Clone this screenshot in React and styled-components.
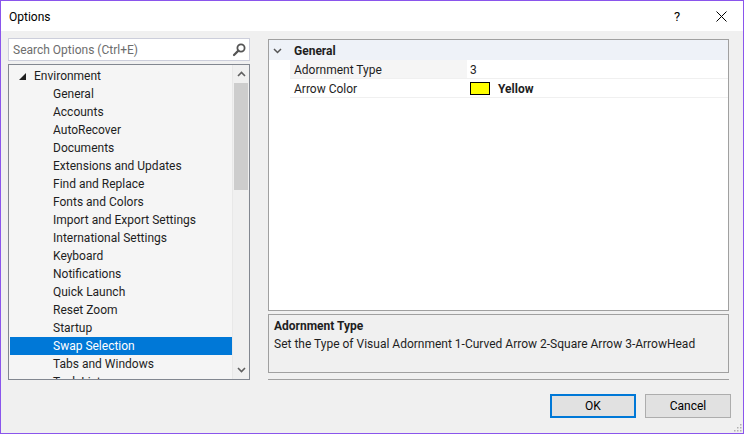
import React from "react";
import styled, { createGlobalStyle } from "styled-components";

const Global = createGlobalStyle`
  html, body { margin: 0; padding: 0; background: #ffffff; }
  * { box-sizing: border-box; }
  body { font-family: Roboto, "Noto Sans", sans-serif; font-size: 12px; color: #1e1e1e; }
`;

const Window = styled.div`
  width: 744px;
  height: 434px;
  border: 1px solid #8a55ec;
  display: flex;
  flex-direction: column;
  background: #f0f0f0;
  overflow: hidden;
`;

const TitleBar = styled.div`
  height: 30px;
  background: #ffffff;
  display: flex;
  align-items: center;
  padding-left: 8px;
  flex-shrink: 0;
`;

const Title = styled.div`
  flex: 1;
  font-size: 12px;
  color: #000;
  padding-top: 2px;
`;

const TitleButton = styled.div`
  width: 44px;
  height: 30px;
  display: flex;
  align-items: center;
  justify-content: center;
  font-size: 13px;
  color: #000;
`;

const Body = styled.div`
  flex: 1;
  display: flex;
  flex-direction: column;
  padding: 7px 12px 0 7px;
`;

const Main = styled.div`
  display: flex;
  gap: 18px;
`;

const LeftCol = styled.div`
  width: 242px;
  display: flex;
  flex-direction: column;
  gap: 3px;
`;

const SearchBox = styled.div`
  height: 23px;
  border: 1px solid #cccedb;
  background: #ffffff;
  display: flex;
  align-items: center;
  padding: 0 3px 0 4px;
`;

const SearchText = styled.div`
  flex: 1;
  color: #6d6d6d;
  font-size: 12px;
  padding-top: 1px;
`;

const Tree = styled.div`
  height: 316px;
  border: 1px solid #828790;
  background: #f5f5f5;
  display: flex;
  overflow: hidden;
`;

const TreeItems = styled.div`
  flex: 1;
  padding: 2px 0 0 1px;
  overflow: hidden;
`;

const TreeRow = styled.div`
  height: 18px;
  display: flex;
  align-items: center;
  padding-left: ${(p) => p.$indent}px;
  background: ${(p) => (p.$selected ? "#0078d7" : "transparent")};
  color: ${(p) => (p.$selected ? "#ffffff" : "#1e1e1e")};
  white-space: nowrap;
`;

const Expander = styled.span`
  width: 15px;
  display: inline-flex;
  align-items: center;
`;

const ScrollBar = styled.div`
  width: 17px;
  background: #f0f0f0;
  border-left: 1px solid #e8e8e8;
  display: flex;
  flex-direction: column;
  align-items: center;
`;

const ScrollArrow = styled.div`
  height: 18px;
  width: 100%;
  display: flex;
  align-items: center;
  justify-content: center;
`;

const ScrollTrack = styled.div`
  flex: 1;
  width: 100%;
  padding: 0 1px;
`;

const Thumb = styled.div`
  height: 107px;
  background: #cdcdcd;
`;

const RightCol = styled.div`
  width: 461px;
  margin-top: 1px;
  display: flex;
  flex-direction: column;
`;

const Grid = styled.div`
  height: 272px;
  border: 1px solid #a0a0a0;
  background: #ffffff;
`;

const CategoryRow = styled.div`
  height: 20px;
  padding-top: 1px;
  background: #eef2f8;
  display: flex;
  align-items: center;
  font-weight: bold;
`;

const Gutter = styled.div`
  width: 25px;
  padding-left: 4px;
  display: flex;
  align-items: center;
`;

const PropRow = styled.div`
  height: 19px;
  display: flex;
  padding-left: 21px;
`;

const PropLabel = styled.div`
  width: 177px;
  padding: 1px 0 0 4px;
  display: flex;
  align-items: center;
  background: ${(p) => (p.$shade ? "#f5f5f5" : "#ffffff")};
  border-bottom: 1px solid #f0f0f0;
`;

const PropValue = styled.div`
  flex: 1;
  display: flex;
  align-items: center;
  padding: 1px 0 0 3px;
  border-bottom: 1px solid #f0f0f0;
  font-weight: ${(p) => (p.$bold ? "bold" : "normal")};
`;

const Swatch = styled.span`
  width: 20px;
  height: 13px;
  background: #ffff00;
  border: 1px solid #000;
  margin-right: 8px;
`;

const Description = styled.div`
  margin-top: 3px;
  height: 59px;
  border: 1px solid #a0a0a0;
  background: #f0f0f0;
  padding: 2px 5px;
  line-height: 18px;
`;

const DescTitle = styled.div`
  font-weight: bold;
`;

const Separator = styled.div`
  margin-top: 6px;
  height: 1px;
  background: #a0a0a0;
`;

const Footer = styled.div`
  display: flex;
  justify-content: flex-end;
  gap: 9px;
  margin-top: 14px;
  position: relative;
  flex: 1;
  align-items: flex-start;
`;

const Button = styled.div`
  width: 86px;
  height: 24px;
  background: #e1e1e1;
  border: ${(p) => (p.$default ? "2px solid #0078d7" : "1px solid #adadad")};
  display: flex;
  align-items: center;
  justify-content: center;
  color: #000;
`;

const Grip = styled.svg`
  position: absolute;
  right: -11px;
  bottom: 1px;
`;

const items = [
  "General",
  "Accounts",
  "AutoRecover",
  "Documents",
  "Extensions and Updates",
  "Find and Replace",
  "Fonts and Colors",
  "Import and Export Settings",
  "International Settings",
  "Keyboard",
  "Notifications",
  "Quick Launch",
  "Reset Zoom",
  "Startup",
  "Swap Selection",
  "Tabs and Windows",
  "Task List",
];

export default function App() {
  return (
    <>
      <Global />
      <Window>
        <TitleBar>
          <Title>Options</Title>
          <TitleButton>?</TitleButton>
          <TitleButton>
            <svg width="11" height="11" viewBox="0 0 11 11">
              <path d="M0.5 0.5 L10.5 10.5 M10.5 0.5 L0.5 10.5" stroke="#000" strokeWidth="1" fill="none" />
            </svg>
          </TitleButton>
        </TitleBar>
        <Body>
          <Main>
            <LeftCol>
              <SearchBox>
                <SearchText>Search Options (Ctrl+E)</SearchText>
                <svg width="14" height="14" viewBox="0 0 14 14">
                  <circle cx="9" cy="5" r="3.6" stroke="#555" strokeWidth="1.8" fill="none" />
                  <path d="M6.4 7.6 L2 12" stroke="#555" strokeWidth="2.2" strokeLinecap="round" />
                </svg>
              </SearchBox>
              <Tree>
                <TreeItems>
                  <TreeRow $indent={9}>
                    <Expander>
                      <svg width="7" height="7" viewBox="0 0 7 7">
                        <polygon points="7,0 7,7 0,7" fill="#1e1e1e" />
                      </svg>
                    </Expander>
                    Environment
                  </TreeRow>
                  {items.map((it) => (
                    <TreeRow key={it} $indent={43} $selected={it === "Swap Selection"}>
                      {it}
                    </TreeRow>
                  ))}
                </TreeItems>
                <ScrollBar>
                  <ScrollArrow>
                    <svg width="9" height="6" viewBox="0 0 9 6">
                      <path d="M1 5 L4.5 1.5 L8 5" stroke="#606060" strokeWidth="1.6" fill="none" />
                    </svg>
                  </ScrollArrow>
                  <ScrollTrack>
                    <Thumb />
                  </ScrollTrack>
                  <ScrollArrow>
                    <svg width="9" height="6" viewBox="0 0 9 6">
                      <path d="M1 1 L4.5 4.5 L8 1" stroke="#606060" strokeWidth="1.6" fill="none" />
                    </svg>
                  </ScrollArrow>
                </ScrollBar>
              </Tree>
            </LeftCol>
            <RightCol>
              <Grid>
                <CategoryRow>
                  <Gutter>
                    <svg width="9" height="6" viewBox="0 0 9 6">
                      <path d="M1 1 L4.5 4.5 L8 1" stroke="#555" strokeWidth="1.5" fill="none" />
                    </svg>
                  </Gutter>
                  General
                </CategoryRow>
                <PropRow>
                  <PropLabel $shade>Adornment Type</PropLabel>
                  <PropValue>3</PropValue>
                </PropRow>
                <PropRow>
                  <PropLabel>Arrow Color</PropLabel>
                  <PropValue $bold>
                    <Swatch />
                    Yellow
                  </PropValue>
                </PropRow>
              </Grid>
              <Description>
                <DescTitle>Adornment Type</DescTitle>
                <div>Set the Type of Visual Adornment 1-Curved Arrow 2-Square Arrow 3-ArrowHead</div>
              </Description>
              <Separator />
            </RightCol>
          </Main>
          <Footer>
            <Button $default>OK</Button>
            <Button>Cancel</Button>
            <Grip width="10" height="10" viewBox="0 0 10 10">
              {[[8, 2], [8, 5], [8, 8], [5, 5], [5, 8], [2, 8]].map(([x, y]) => (
                <rect key={`${x}-${y}`} x={x} y={y} width="1.5" height="1.5" fill="#b0b0b0" />
              ))}
            </Grip>
          </Footer>
        </Body>
      </Window>
    </>
  );
}
